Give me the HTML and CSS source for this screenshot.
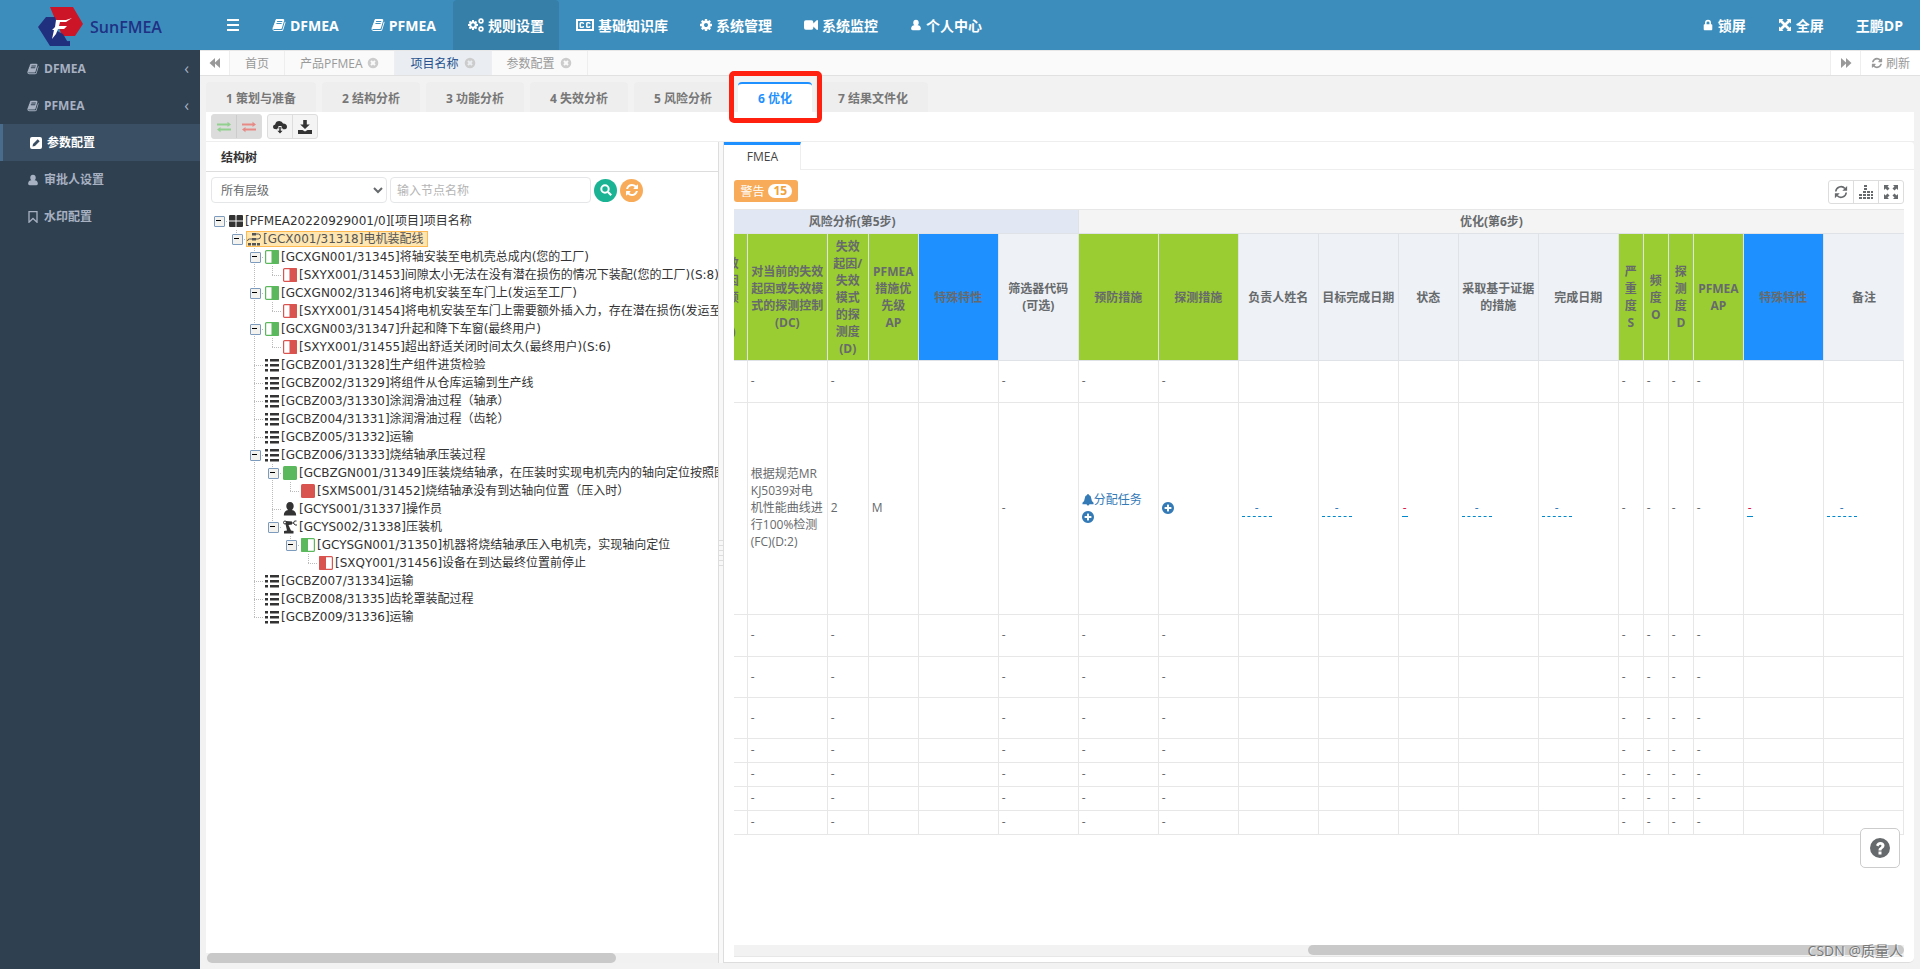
FILE: index.html
```html
<!DOCTYPE html>
<html lang="zh-CN">
<head>
<meta charset="utf-8">
<title>SunFMEA</title>
<link rel="stylesheet" href="styles.css">
</head>
<body>
<svg class="sprite" aria-hidden="true">
  <symbol id="book" viewBox="0 0 1792 1792"><path d="M1703 478q40 57 18 129l-275 906q-19 64-76.5 107.5t-122.5 43.5h-923q-77 0-148.5-53.5t-99.5-131.5q-24-67-2-127 0-4 3-27t4-37q1-8-3-21.5t-3-19.5q2-11 8-21t16.5-23.5 16.5-23.5q23-38 45-91.5t30-91.5q3-10 .5-30t-.5-28q3-11 17-28t17-23q21-36 42-92t25-90q1-9-2.5-32t.5-28q4-13 22-30.5t22-22.5q19-26 42.5-84.5t27.5-96.5q1-8-3-25.5t-2-26.5q2-8 9-18t18-23 17-21q8-12 16.5-30.5t15-35 16-36 19.5-32 26.5-23.5 36-11.5 47.5 5.5l-1 3q38-9 51-9h761q74 0 114 56t18 130l-274 906q-36 119-71.5 153.5t-128.5 34.5h-869q-27 0-38 15-11 16-1 43 24 70 144 70h923q29 0 56-15.5t35-41.5l300-987q7-22 5-57 38 15 59 43zm-1064 2q-4 13 2 22.5t20 9.5h608q13 0 25.5-9.5t16.5-22.5l21-64q4-13-2-22.5t-20-9.5h-608q-13 0-25.5 9.5t-16.5 22.5zm-83 256q-4 13 2 22.5t20 9.5h608q13 0 25.5-9.5t16.5-22.5l21-64q4-13-2-22.5t-20-9.5h-608q-13 0-25.5 9.5t-16.5 22.5z"/></symbol>
  <symbol id="refresh" viewBox="0 0 1792 1792"><path d="M1639 1056q0 5-1 7-64 268-268 434.5t-478 166.5q-146 0-282.5-55t-243.5-157l-129 129q-19 19-45 19t-45-19-19-45v-448q0-26 19-45t45-19h448q26 0 45 19t19 45-19 45l-137 137q71 66 161 102t187 36q134 0 250-65t186-179q11-17 53-117 8-23 30-23h192q13 0 22.5 9.5t9.5 22.5zm25-800v448q0 26-19 45t-45 19h-448q-26 0-45-19t-19-45 19-45l138-138q-148-137-349-137-134 0-250 65t-186 179q-11 17-53 117-8 23-30 23h-199q-13 0-22.5-9.5t-9.5-22.5v-7q65-268 270-434.5t480-166.5q146 0 284 55.5t245 156.5l130-129q19-19 45-19t45 19 19 45z"/></symbol>
  <symbol id="cog" viewBox="128 128 1536 1536"><path d="M1152 896q0-106-75-181t-181-75-181 75-75 181 75 181 181 75 181-75 75-181zm512-109v222q0 12-8 23t-20 13l-185 28q-19 54-39 91 35 50 107 138 10 12 10 25t-9 23q-27 37-99 108t-94 71q-12 0-26-9l-138-108q-44 23-91 38-16 136-29 186-7 28-36 28h-222q-14 0-24.5-8.5t-11.5-21.5l-28-184q-49-16-90-37l-141 107q-10 9-25 9-14 0-25-11-126-114-165-168-7-10-7-23 0-12 8-23 15-21 51-66.5t54-70.5q-27-50-41-99l-183-27q-13-2-21-12.5t-8-23.5v-222q0-12 8-23t19-13l186-28q14-46 39-92-40-57-107-138-10-12-10-24 0-10 9-23 26-36 98.5-107.5t94.5-71.5q13 0 26 10l138 107q44-23 91-38 16-136 29-186 7-28 36-28h222q14 0 24.5 8.5t11.5 21.5l28 184q49 16 90 37l142-107q9-9 24-9 13 0 25 10 129 119 165 170 7 8 7 22 0 12-8 23-15 21-51 66.5t-54 70.5q26 50 41 98l183 28q13 2 21 12.5t8 23.5z"/></symbol>
  <symbol id="plus" viewBox="128 128 1536 1536"><path d="M1344 960v-128q0-26-19-45t-45-19h-256v-256q0-26-19-45t-45-19h-128q-26 0-45 19t-19 45v256h-256q-26 0-45 19t-19 45v128q0 26 19 45t45 19h256v256q0 26 19 45t45 19h128q26 0 45-19t19-45v-256h256q26 0 45-19t19-45zm320-64q0 209-103 385.5t-279.5 279.5-385.5 103-385.5-103-279.5-279.5-103-385.5 103-385.5 279.5-279.5 385.5-103 385.5 103 279.5 279.5 103 385.5z"/></symbol>
  <symbol id="cogs" viewBox="0 0 16 14"><use href="#cog" x="0" y="2" width="10" height="10"/><use href="#cog" x="10" y="0" width="6" height="6"/><use href="#cog" x="10" y="8" width="6" height="6"/></symbol>
  <symbol id="cc" viewBox="0 0 18 14"><path fill-rule="evenodd" d="M0 1h18v12H0zM2 3v8h14V3zM8 5.5V6H6.800V5.500H5v3h1.800V8H8v.5Q8 10 6.500 10h-1.500Q3.500 10 3.500 8.500v-3Q3.500 4 5 4h1.500Q8 4 8 5.500zM14.500 5.500V6h-1.200V5.500h-1.800v3h1.800V8h1.200v.5q0 1.500-1.500 1.500h-1.500Q10 10 10 8.500v-3Q10 4 11.500 4H13q1.500 0 1.500 1.500z"/></symbol>
  <symbol id="video" viewBox="0 0 15 14"><path d="M2 2h6q2 0 2 2v1.500L13.500 2H15v10h-1.500L10 8.500V10q0 2-2 2H2q-2 0-2-2V4q0-2 2-2z"/></symbol>
  <symbol id="user" viewBox="0 0 12 14"><path d="M6 1c2 0 3.200 1.500 3.200 3.300 0 1.200-.5 2.300-1.300 2.900 2.600.2 3.800 1.800 3.800 4.300Q11.700 13 10 13H2Q.3 13 .3 11.500C.3 9 1.500 7.400 4.100 7.200 3.300 6.600 2.800 5.500 2.800 4.300 2.800 2.500 4 1 6 1z"/></symbol>
  <symbol id="lock" viewBox="0 0 10 14"><path fill-rule="evenodd" d="M1.500 6V4.500a3.500 3.500 0 0 1 7 0V6H9q1 0 1 1v5q0 1-1 1H1q-1 0-1-1V7q0-1 1-1zM3.300 6h3.400V4.500a1.700 1.700 0 0 0-3.400 0z"/></symbol>
  <symbol id="expand" viewBox="0 0 14 14"><path d="M1 1h4.500L4.200 2.300 7 5.100l2.800-2.800L8.500 1H13v4.500l-1.300-1.300L8.900 7l2.800 2.800L13 8.500V13H8.500l1.300-1.300L7 8.900l-2.800 2.800L5.500 13H1V8.500l1.300 1.300L5.100 7 2.300 4.200 1 5.500z"/></symbol>
  <symbol id="full" viewBox="0 0 14 14"><path d="M0 0h5L3.500 1.500 5.500 3.500l-2 2L1.500 3.500 0 5zM14 0v5l-1.500-1.500-2 2-2-2 2-2L9 0zM0 14V9l1.500 1.500 2-2 2 2-2 2L5 14zM14 14H9l1.500-1.500-2-2 2-2 2 2L14 9z"/></symbol>
  <symbol id="edit" viewBox="0 0 12 12"><path fill-rule="evenodd" d="M2 0h8q2 0 2 2v8q0 2-2 2H2q-2 0-2-2V2q0-2 2-2zM2.500 9.500l2.500-.5 4.700-4.700-2-2L3 7z"/></symbol>
  <symbol id="mark" viewBox="0 0 10 12"><path d="M1 .7h8v10.500L5 7.500l-4 3.700z" fill="none" stroke="currentColor" stroke-width="1.300"/></symbol>
  <symbol id="close" viewBox="0 0 12 12"><path fill-rule="evenodd" d="M6 .7a5.300 5.300 0 1 1 0 10.600A5.300 5.300 0 0 1 6 .7zM4.700 3.300L3.300 4.700 4.600 6 3.300 7.300l1.400 1.400L6 7.400l1.300 1.300 1.400-1.400L7.400 6l1.300-1.300-1.400-1.400L6 4.600z"/></symbol>
  <symbol id="back" viewBox="0 0 12 12"><path d="M6 1v4.500L11 1v10L6 6.500V11L.5 6z"/></symbol>
  <symbol id="swap" viewBox="0 0 14 12"><path d="M0 2.600h10.500V.800L14 3.500 10.500 6V4.400H0zM14 9.400H3.500V11.200L0 8.500 3.500 6v1.600H14z"/></symbol>
  <symbol id="cloud" viewBox="0 0 15 14"><path d="M3.500 9.500Q0 9.500 0 6.800 0 4.600 2.300 4.200 3 .5 6.800.5q3 0 4 2.700Q15 3.500 15 6.600 15 9.500 11.500 9.500h-1V8.300L9.200 9V6H5.800v3L4.500 8.300v1.200zM6.700 7h1.600v4h2L7.500 14l-2.800-3h2z"/></symbol>
  <symbol id="download" viewBox="0 0 14 14"><path d="M5.200 0h3.600v4.500h3L7 9 2.200 4.500h3zM0 10h4.500L7 11.500 9.500 10H14v4H0z"/></symbol>
  <symbol id="search" viewBox="0 0 12 12"><path d="M8 8l3.200 3.200" stroke="currentColor" stroke-width="2.200"/><circle cx="5" cy="5" r="3.700" fill="none" stroke="currentColor" stroke-width="2"/></symbol>
  <symbol id="cycle" viewBox="0 0 16 16"><path d="M2 7.500A6 6 0 0 1 12.500 4M14 8.500A6 6 0 0 1 3.500 12" fill="none" stroke="currentColor" stroke-width="1.800"/><path d="M15 1v5.500H9.500zM1 15V9.500h5.500z"/></symbol>
  <symbol id="bars" viewBox="0 0 14 14"><path d="M0 12h3v2H0zM0 9h3v2H0zM4 12h3v2H4zM4 9h3v2H4zM4 6h3v2H4zM5 0h3v2H5zM5 3h3v2H5zM8 12h3v2H8zM8 9h3v2H8zM8 6h3v2H8zM12 12h2v2h-2zM12 9h2v2h-2zM12 6h2v2h-2z"/></symbol>
  <symbol id="bell" viewBox="0 0 12 13"><path d="M6 0q1 0 1 1.100Q9.300 1.700 9.500 4.500 9.700 8 12 9.500V11H7.500Q7.300 12.500 6 12.500T4.500 11H0V9.500Q2.300 8 2.500 4.500 2.700 1.700 5 1.100 5 0 6 0z"/></symbol>
  <symbol id="grid4" viewBox="0 0 14 14"><path d="M1 1h4.500q1 0 1 1v4.500H0V2q0-1 1-1zM8.500 1H13q1 0 1 1v4.500H7.500V2q0-1 1-1zM0 7.500h6.500V13H1q-1 0-1-1zM7.500 7.500H14V12q0 1-1 1H7.500z"/></symbol>
  <symbol id="flow" viewBox="0 0 14 14"><path d="M5 1h4v2.500H5zM5 6h4v2.500H5zM5 11h4v2.500H5zM1 11h3v2.500H1zM10 11h3v2.500h-3z"/><path d="M9 2h2.500Q13.500 2 13.500 4.500T11 7H9M5 7H2.500Q.5 7 .5 9" fill="none" stroke="currentColor"/></symbol>
  <symbol id="list" viewBox="0 0 14 14"><path d="M0 1h3v2.500H0zM5 1h9v2.500H5zM0 6h3v2.500H0zM5 6h9v2.500H5zM0 11h3v2.500H0zM5 11h9v2.500H5z"/></symbol>
  <symbol id="person" viewBox="0 0 14 14"><path d="M7 0c2.400 0 3.700 1.800 3.700 4 0 1.600-.7 3.200-1.900 4 2.800.6 4.400 2 4.400 5.500H.8C.8 10 2.400 8.600 5.200 8 4 7.200 3.300 5.600 3.300 4 3.300 1.800 4.600 0 7 0z"/></symbol>
  <symbol id="robot" viewBox="0 0 14 14"><circle cx="2" cy="2.500" r="1.500" fill="none" stroke="currentColor"/><path d="M3 1l6 .5v3L5.500 5 8 10.500 10.500 11v2.500H1V11l3-.5L2.500 4z"/><path d="M9 3h2M13.500 1h-2L10.500 3l1.500 2h2" fill="none" stroke="currentColor"/></symbol>
  <symbol id="right-half" viewBox="0 0 14 14"><rect x=".6" y=".6" width="12.800" height="12.800" rx="1" fill="#fff" stroke="currentColor" stroke-width="1.200"/><path d="M6.500 0H13q1 0 1 1v12q0 1-1 1H6.500z"/></symbol>
  <symbol id="left-half" viewBox="0 0 14 14"><rect x=".6" y=".6" width="12.800" height="12.800" rx="1" fill="#fff" stroke="currentColor" stroke-width="1.200"/><path d="M1 0h6v14H1q-1 0-1-1V1q0-1 1-1z"/></symbol>
  <symbol id="solid" viewBox="0 0 14 14"><rect width="14" height="14" rx="1.500"/></symbol>
  <symbol id="help" viewBox="0 0 20 20"><path fill-rule="evenodd" d="M10 0a10 10 0 1 1 0 20 10 10 0 0 1 0-20zM8.500 13.500v3h3v-3zM6 7.200l2.400 1.200Q9 6.700 10.200 6.700q1.300 0 1.300 1.100 0 .8-1.400 1.600Q8.500 10.300 8.500 12v.5h3V12q0-.6 1.300-1.400Q14.500 9.500 14.500 7.500 14.300 3.900 10.300 3.900 7.500 3.900 6 7.200z"/></symbol>
</svg>

<header class="top">
  <a class="brand" href="#">
    <svg class="logo" viewBox="0 0 46 42"><path fill="#cc1628" d="M12 1h23l10 17-8 12H24l-6-17h-1z"/><path fill="#20307f" d="M8 11h9l3 9-4 16 16-1v5H12L0 21z"/><path fill="#20307f" d="M17 24l8 4 7 12H12z"/><path fill="#fff" d="M18 14h10l6-2-6 4h-6l-1 4h8l-3 3h-6l-2 5-4 5 2-9h-2l3-3z"/></svg>
    <span>SunFMEA</span>
  </a>
  <button class="burger" type="button" aria-label="菜单"><i></i><i></i><i></i></button>
  <nav class="menu">
    <a href="#"><svg class="i14"><use href="#book"/></svg>DFMEA</a>
    <a href="#"><svg class="i14"><use href="#book"/></svg>PFMEA</a>
    <a href="#" class="on"><svg class="i16"><use href="#cogs"/></svg>规则设置</a>
    <a href="#"><svg class="i18"><use href="#cc"/></svg>基础知识库</a>
    <a href="#"><svg class="i12"><use href="#cog"/></svg>系统管理</a>
    <a href="#"><svg class="i14"><use href="#video"/></svg>系统监控</a>
    <a href="#"><svg class="i12"><use href="#user"/></svg>个人中心</a>
  </nav>
  <nav class="menu account">
    <a href="#"><svg class="i12"><use href="#lock"/></svg>锁屏</a>
    <a href="#"><svg class="i14"><use href="#expand"/></svg>全屏</a>
    <a href="#">王鹏DP</a>
  </nav>
</header>

<div class="shell">
  <nav class="side">
    <a href="#"><svg class="i12"><use href="#book"/></svg>DFMEA<b>‹</b></a>
    <a href="#"><svg class="i12"><use href="#book"/></svg>PFMEA<b>‹</b></a>
    <a href="#" class="on"><svg class="i12"><use href="#edit"/></svg>参数配置</a>
    <a href="#"><svg class="i12"><use href="#user"/></svg>审批人设置</a>
    <a href="#"><svg class="i12"><use href="#mark"/></svg>水印配置</a>
  </nav>

  <main class="main">
    <div class="pages">
      <button type="button" class="end" aria-label="向左"><svg class="i12"><use href="#back"/></svg></button>
      <a href="#">首页</a>
      <a href="#">产品PFMEA<svg class="i12"><use href="#close"/></svg></a>
      <a href="#" class="on">项目名称<svg class="i12"><use href="#close"/></svg></a>
      <a href="#">参数配置<svg class="i12"><use href="#close"/></svg></a>
      <button type="button" class="end push" aria-label="向右"><svg class="i12 flip"><use href="#back"/></svg></button>
      <button type="button" class="end reload"><svg class="i12"><use href="#refresh"/></svg>刷新</button>
    </div>

    <div class="work">
      <nav class="steps">
        <a href="#">1 策划与准备</a>
        <a href="#">2 结构分析</a>
        <a href="#">3 功能分析</a>
        <a href="#">4 失效分析</a>
        <a href="#">5 风险分析</a>
        <a href="#" class="on">6 优化</a>
        <a href="#">7 结果文件化</a>
      </nav>
      <div class="tools">
        <div class="group off">
          <button type="button" class="green" disabled aria-label="展开"><svg class="i14"><use href="#swap"/></svg></button>
          <button type="button" class="red" disabled aria-label="收起"><svg class="i14"><use href="#swap"/></svg></button>
        </div>
        <div class="group">
          <button type="button" aria-label="云下载"><svg class="i14"><use href="#cloud"/></svg></button>
          <button type="button" aria-label="下载"><svg class="i14"><use href="#download"/></svg></button>
        </div>
      </div>

      <div class="panes">
        <section class="left">
          <h2>结构树</h2>
          <form class="filter">
            <select aria-label="层级"><option>所有层级</option></select>
            <input type="text" placeholder="输入节点名称" aria-label="节点名称">
            <button type="button" class="find" aria-label="搜索"><svg class="i12"><use href="#search"/></svg></button>
            <button type="button" class="reset" aria-label="重置"><svg class="i14"><use href="#refresh"/></svg></button>
          </form>
          <div class="treebox">
            <ul class="tree">
              <li><div class="node"><i class="sw"></i><a href="#"><svg class="i14"><use href="#grid4"/></svg>[PFMEA20220929001/0][项目]项目名称</a></div>
                <ul><li><div class="node"><i class="sw"></i><a href="#" class="sel"><svg class="i14"><use href="#flow"/></svg>[GCX001/31318]电机装配线</a></div>
                  <ul>
                    <li><div class="node"><i class="sw"></i><a href="#"><svg class="i14 green"><use href="#right-half"/></svg>[GCXGN001/31345]将轴安装至电机壳总成内(您的工厂)</a></div>
                      <ul><li><div class="node"><i></i><a href="#"><svg class="i14 red"><use href="#right-half"/></svg>[SXYX001/31453]间隙太小无法在没有潜在损伤的情况下装配(您的工厂)(S:8)</a></div></li></ul></li>
                    <li><div class="node"><i class="sw"></i><a href="#"><svg class="i14 green"><use href="#right-half"/></svg>[GCXGN002/31346]将电机安装至车门上(发运至工厂)</a></div>
                      <ul><li><div class="node"><i></i><a href="#"><svg class="i14 red"><use href="#right-half"/></svg>[SXYX001/31454]将电机安装至车门上需要额外插入力，存在潜在损伤(发运至</a></div></li></ul></li>
                    <li><div class="node"><i class="sw"></i><a href="#"><svg class="i14 green"><use href="#right-half"/></svg>[GCXGN003/31347]升起和降下车窗(最终用户)</a></div>
                      <ul><li><div class="node"><i></i><a href="#"><svg class="i14 red"><use href="#right-half"/></svg>[SXYX001/31455]超出舒适关闭时间太久(最终用户)(S:6)</a></div></li></ul></li>
                    <li><div class="node"><i></i><a href="#"><svg class="i14"><use href="#list"/></svg>[GCBZ001/31328]生产组件进货检验</a></div></li>
                    <li><div class="node"><i></i><a href="#"><svg class="i14"><use href="#list"/></svg>[GCBZ002/31329]将组件从仓库运输到生产线</a></div></li>
                    <li><div class="node"><i></i><a href="#"><svg class="i14"><use href="#list"/></svg>[GCBZ003/31330]涂润滑油过程（轴承）</a></div></li>
                    <li><div class="node"><i></i><a href="#"><svg class="i14"><use href="#list"/></svg>[GCBZ004/31331]涂润滑油过程（齿轮）</a></div></li>
                    <li><div class="node"><i></i><a href="#"><svg class="i14"><use href="#list"/></svg>[GCBZ005/31332]运输</a></div></li>
                    <li><div class="node"><i class="sw"></i><a href="#"><svg class="i14"><use href="#list"/></svg>[GCBZ006/31333]烧结轴承压装过程</a></div>
                      <ul>
                        <li><div class="node"><i class="sw"></i><a href="#"><svg class="i14 green"><use href="#solid"/></svg>[GCBZGN001/31349]压装烧结轴承，在压装时实现电机壳内的轴向定位按照图</a></div>
                          <ul><li><div class="node"><i></i><a href="#"><svg class="i14 red"><use href="#solid"/></svg>[SXMS001/31452]烧结轴承没有到达轴向位置（压入时）</a></div></li></ul></li>
                        <li><div class="node"><i></i><a href="#"><svg class="i14"><use href="#person"/></svg>[GCYS001/31337]操作员</a></div></li>
                        <li><div class="node"><i class="sw"></i><a href="#"><svg class="i14"><use href="#robot"/></svg>[GCYS002/31338]压装机</a></div>
                          <ul><li><div class="node"><i class="sw"></i><a href="#"><svg class="i14 green"><use href="#left-half"/></svg>[GCYSGN001/31350]机器将烧结轴承压入电机壳，实现轴向定位</a></div>
                            <ul><li><div class="node"><i></i><a href="#"><svg class="i14 red"><use href="#left-half"/></svg>[SXQY001/31456]设备在到达最终位置前停止</a></div></li></ul></li></ul></li>
                      </ul></li>
                    <li><div class="node"><i></i><a href="#"><svg class="i14"><use href="#list"/></svg>[GCBZ007/31334]运输</a></div></li>
                    <li><div class="node"><i></i><a href="#"><svg class="i14"><use href="#list"/></svg>[GCBZ008/31335]齿轮罩装配过程</a></div></li>
                    <li><div class="node"><i></i><a href="#"><svg class="i14"><use href="#list"/></svg>[GCBZ009/31336]运输</a></div></li>
                  </ul></li></ul></li>
            </ul>
          </div>
          <div class="bar"><i></i></div>
        </section>

        <div class="split"><i></i></div>

        <section class="right">
          <nav class="tabs"><a href="#">FMEA</a></nav>
          <div class="sheet">
            <div class="acts">
              <button type="button" class="warn">警告<span>15</span></button>
              <div class="group plain">
                <button type="button" aria-label="刷新"><svg class="i14"><use href="#cycle"/></svg></button>
                <button type="button" aria-label="列"><svg class="i14"><use href="#bars"/></svg></button>
                <button type="button" aria-label="全屏"><svg class="i14"><use href="#full"/></svg></button>
              </div>
            </div>
            <table class="fmea">
              <colgroup><col><col class="w80"><col class="w41"><col class="w50"><col class="w80"><col class="w80"><col class="w80"><col class="w80"><col class="w80"><col class="w80"><col class="w60"><col class="w80"><col class="w80"><col class="w25"><col class="w25"><col class="w25"><col class="w50"><col class="w80"><col class="w80"></colgroup>
              <thead>
                <tr class="band"><th colspan="6" class="risk"><span>风险分析(第5步)</span></th><th colspan="13">优化(第6步)</th></tr>
                <tr class="names">
                  <th class="g cut"><div><span>失效起因的频度(O)</span></div></th>
                  <th class="g">对当前的失效起因或失效模式的探测控制(DC)</th>
                  <th class="g">失效起因/失效模式的探测度(D)</th>
                  <th class="g">PFMEA措施优先级<br>AP</th>
                  <th class="b">特殊特性</th>
                  <th>筛选器代码<br>(可选)</th>
                  <th class="g">预防措施</th>
                  <th class="g">探测措施</th>
                  <th>负责人姓名</th>
                  <th>目标完成日期</th>
                  <th>状态</th>
                  <th>采取基于证据的措施</th>
                  <th>完成日期</th>
                  <th class="g">严重度S</th>
                  <th class="g">频度O</th>
                  <th class="g">探测度D</th>
                  <th class="g">PFMEA AP</th>
                  <th class="b">特殊特性</th>
                  <th>备注</th>
                </tr>
              </thead>
              <tbody>
                <tr class="h42"><td></td><td>-</td><td>-</td><td></td><td></td><td>-</td><td>-</td><td>-</td><td></td><td></td><td></td><td></td><td></td><td>-</td><td>-</td><td>-</td><td>-</td><td></td><td></td></tr>
                <tr class="h212"><td></td><td>根据规范MRKJ5039对电机性能曲线进行100%检测(FC)(D:2)</td><td>2</td><td>M</td><td></td><td>-</td>
                  <td><a href="#"><svg class="i12"><use href="#bell"/></svg>分配任务</a><br><a href="#" aria-label="添加"><svg class="i12"><use href="#plus"/></svg></a></td>
                  <td><a href="#" aria-label="添加"><svg class="i12"><use href="#plus"/></svg></a></td>
                  <td><a href="#" class="ed">-</a></td><td><a href="#" class="ed">-</a></td><td><a href="#" class="ed none">-</a></td><td><a href="#" class="ed">-</a></td><td><a href="#" class="ed">-</a></td>
                  <td>-</td><td>-</td><td>-</td><td>-</td><td><a href="#" class="ed none">-</a></td><td><a href="#" class="ed">-</a></td></tr>
                <tr class="h42"><td></td><td>-</td><td>-</td><td></td><td></td><td>-</td><td>-</td><td>-</td><td></td><td></td><td></td><td></td><td></td><td>-</td><td>-</td><td>-</td><td>-</td><td></td><td></td></tr>
                <tr class="h41"><td></td><td>-</td><td>-</td><td></td><td></td><td>-</td><td>-</td><td>-</td><td></td><td></td><td></td><td></td><td></td><td>-</td><td>-</td><td>-</td><td>-</td><td></td><td></td></tr>
                <tr class="h41"><td></td><td>-</td><td>-</td><td></td><td></td><td>-</td><td>-</td><td>-</td><td></td><td></td><td></td><td></td><td></td><td>-</td><td>-</td><td>-</td><td>-</td><td></td><td></td></tr>
                <tr class="h24"><td></td><td>-</td><td>-</td><td></td><td></td><td>-</td><td>-</td><td>-</td><td></td><td></td><td></td><td></td><td></td><td>-</td><td>-</td><td>-</td><td>-</td><td></td><td></td></tr>
                <tr class="h24"><td></td><td>-</td><td>-</td><td></td><td></td><td>-</td><td>-</td><td>-</td><td></td><td></td><td></td><td></td><td></td><td>-</td><td>-</td><td>-</td><td>-</td><td></td><td></td></tr>
                <tr class="h24"><td></td><td>-</td><td>-</td><td></td><td></td><td>-</td><td>-</td><td>-</td><td></td><td></td><td></td><td></td><td></td><td>-</td><td>-</td><td>-</td><td>-</td><td></td><td></td></tr>
                <tr class="h24"><td></td><td>-</td><td>-</td><td></td><td></td><td>-</td><td>-</td><td>-</td><td></td><td></td><td></td><td></td><td></td><td>-</td><td>-</td><td>-</td><td>-</td><td></td><td></td></tr>
              </tbody>
            </table>
            <div class="track"><i></i></div>
          </div>
        </section>
      </div>
    </div>
  </main>
</div>
<div class="marker"></div>
<button type="button" class="help" aria-label="帮助"><svg><use href="#help"/></svg></button>
<span class="credit">CSDN @质量人</span>
</body>
</html>
```
FILE: styles.css
```css
* { box-sizing: border-box; }
body {
  margin: 0; height: 100vh; display: flex; flex-direction: column; overflow: hidden;
  font: 12px/17px "Open Sans", "Noto Sans CJK SC", sans-serif; color: #676a6c; background: #f2f2f2;
}
a { color: inherit; text-decoration: none; }
button { font: inherit; color: inherit; padding: 0; border: 0; background: none; }
svg { fill: currentColor; flex: none; display: block; }
i { font-style: normal; }
ul { list-style: none; margin: 0; padding: 0; }
.sprite { width: 0; height: 0; position: absolute; }
.i12 { width: 12px; height: 12px; }
.i14 { width: 14px; height: 14px; }
.i16 { width: 16px; height: 14px; }
.i18 { width: 18px; height: 14px; }

.top { display: flex; height: 50px; flex: none; background: #3c8dbc; color: #fff; }
.brand { width: 200px; padding: 4px 0 0 38px; display: flex; align-items: center; gap: 6px; color: #1f3184; font-size: 16px; font-weight: 600; }
.brand .logo { width: 46px; height: 42px; }
.burger { width: 57px; padding-left: 27px; display: flex; flex-direction: column; justify-content: center; gap: 3px; }
.burger i { width: 12px; height: 2px; background: #fff; }
.menu { display: flex; gap: 2px; font-size: 14px; font-weight: 700; }
.menu a { display: flex; align-items: center; gap: 4px; padding: 0 15px; height: 50px; }
.menu .on { background: #367fa9; border-radius: 4px 4px 0 0; }
.account { margin-left: auto; padding-right: 2px; }

.shell { flex: 1; display: flex; min-height: 0; }
.side { width: 200px; flex: none; background: #2f4050; color: #a7b1c2; font-weight: 700; }
.side a { display: flex; align-items: center; gap: 5px; height: 37px; padding: 0 11px 0 27px; }
.side b { margin-left: auto; font-size: 16px; font-weight: 400; }
.side .on { background: #3a4f63; color: #fff; border-left: 3px solid #4a6c8c; }

.main { flex: 1; min-width: 0; display: flex; flex-direction: column; }
.pages { display: flex; height: 26px; background: #fafafa; border-top: 1px solid #e7e7e7; border-bottom: 1px solid #e1e1e1; color: #999; }
.pages > * { display: flex; align-items: center; gap: 5px; padding: 0 15px; border-right: 1px solid #eee; }
.pages .end { padding: 0 8px 0 9px; background: #fff; }
.pages .push { margin-left: auto; border-left: 1px solid #eee; }
.pages .reload { gap: 3px; padding: 0 10px; border-right: 0; }
.pages a svg { color: #ccc; }
.pages .on { background: #eaedf1; color: #23508e; }
.flip { transform: scaleX(-1); }

.work { flex: 1; min-height: 0; display: flex; flex-direction: column; padding: 6px; }
.steps { display: flex; gap: 6px; font-weight: 700; color: #777; }
.steps a { height: 30px; padding: 8px 20px 0; background: #eee; border-radius: 4px 4px 0 0; }
.steps .on { background: #fff; color: #1e90ff; border-top: 2px solid #1e90ff; padding-top: 6px; }
.tools { display: flex; gap: 5px; height: 30px; padding: 2px 5px; background: #fff; border-bottom: 1px solid #eee; }
.group { display: flex; height: 25px; border: 1px solid #ddd; border-radius: 3px; background: #f4f4f4; color: #333; }
.group button { width: 24px; display: grid; place-items: center; }
.group button + button { width: 25px; border-left: 1px solid #ddd; }
.group.off { background: #dcdcdc; }
.off button + button { border-left-color: #ccc; }
.off .green { color: #92d08f; }
.off .red { color: #e78a86; }
.group.plain { height: 24px; background: #fff; color: #676a6c; }

.panes { flex: 1; min-height: 0; display: flex; }
.left { width: 30%; flex: none; display: flex; flex-direction: column; background: #fff; }
.left h2 { margin: 0; padding: 7px 15px 0; height: 30px; font-size: 12px; line-height: 18px; color: #333; border-bottom: 1px solid #ddd; }
.filter { display: flex; align-items: center; gap: 3px; padding: 5px; }
.filter select, .filter input { height: 26px; font: inherit; color: #676a6c; border: 1px solid #e5e6e7; border-radius: 4px; background: #fff; }
.filter select { width: 176px; padding: 0 5px; }
.filter input { width: 201px; padding: 0 6px; }
.filter input::placeholder { color: #b5b5b5; }
.filter button { width: 23px; height: 23px; border-radius: 50%; color: #fff; display: grid; place-items: center; }
.find { background: #1ab394; }
.reset { background: #f8ac59; }

.treebox { flex: 1; overflow: hidden; padding: 4px 0 4px 4px; }
.tree { font: 12px/18px "DejaVu Sans", "Noto Sans CJK SC", sans-serif; color: #333; white-space: nowrap; }
.tree ul { padding-left: 18px; }
.tree li li { background: repeating-linear-gradient(#bbb 0 1px, transparent 1px 2px) 8px 0 / 1px 100% no-repeat; }
.tree li li:last-child { background-size: 1px 10px; }
.node { display: flex; align-items: center; height: 18px; }
.node i { width: 18px; height: 18px; flex: none; background: repeating-linear-gradient(to right, #bbb 0 1px, transparent 1px 2px) 8px 9px / 10px 1px no-repeat; display: flex; align-items: center; padding-left: 4px; }
.sw::before { content: ""; width: 9px; height: 9px; border: 1px solid #7d9cbd; border-radius: 1px; background: linear-gradient(#000, #000) 1px 3px / 5px 1px no-repeat #f4f2ee; }
.node a { display: flex; align-items: center; gap: 2px; height: 16px; padding: 0 1px; }
.node .sel { background: #ffe6b0; border: 1px solid #ffb951; padding: 0 4px 0 0; color: #555; }
.node .green { color: #5cb85c; }
.node .red { color: #d9534f; }
.bar { height: 10px; padding-left: 1px; background: #f1f1f1; }
.bar i { display: block; width: 80%; height: 10px; border-radius: 5px; background: #c9c9c9; }

.split { width: 6px; flex: none; border: solid #ddd; border-width: 0 1px; background: #f8f8f8; display: flex; align-items: center; }
.split i { width: 100%; height: 26px; background: repeating-linear-gradient(#ddd 0 1px, transparent 1px 5px); }

.right { flex: 1; min-width: 0; display: flex; flex-direction: column; background: #fff; border-bottom: 1px solid #ddd; border-radius: 0 4px 5px 0; }
.tabs { height: 28px; flex: none; border-bottom: 1px solid #eee; }
.tabs a { display: block; width: 77px; height: 28px; text-align: center; line-height: 24px; background: #fff; border-top: 3px solid #1e90ff; border-right: 1px solid #eee; color: #444; }
.sheet { flex: 1; min-height: 0; display: flex; flex-direction: column; padding: 10px 10px 5px; }
.acts { display: flex; justify-content: space-between; align-items: flex-start; height: 29px; flex: none; }
.warn { display: flex; align-items: center; gap: 4px; height: 22px; padding: 0 6px; border-radius: 3px; background: #f8ac59; color: #fff; }
.warn span { padding: 0 5px; height: 14px; line-height: 14px; border-radius: 7px; background: #fff; color: #f0a23c; font-weight: 700; }

.fmea { width: 100%; table-layout: fixed; border-collapse: separate; border-spacing: 0; border-top: 1px solid #e7e7e7; }
.w80 { width: 80px; } .w60 { width: 60px; } .w50 { width: 50px; } .w41 { width: 41px; } .w25 { width: 25px; }
.fmea th { padding: 0 3px; border: solid #dfe3e8; border-width: 0 1px 1px 0; background: #eef1f6; font-weight: 700; }
.fmea th:last-child { border-right: 0; }
.fmea .band th { height: 24px; background: #f4f4f4; }
.fmea .band .risk { background: #e1e7f3; }
.risk span { padding-right: 108px; }
.fmea .names th { height: 127px; }
.fmea .g { background: #9acd32; }
.fmea .b { background: #1e90ff; }
.fmea .cut { padding: 0; overflow: hidden; }
.cut div { display: flex; justify-content: flex-end; }
.cut span { width: 40px; flex: none; padding: 0 7px; }
.fmea td { padding: 0 3px 2px; border: solid #e7e7e7; border-width: 0 1px 1px 0; word-break: break-all; }
.h212 td { height: 212px; } .h42 td { height: 42px; } .h41 td { height: 41px; } .h24 td { height: 24px; }
.fmea a { color: #337ab7; }
.fmea td svg { display: inline-block; vertical-align: -2px; }
.fmea a.ed { display: inline-block; padding: 0 13px; border-bottom: 1px dashed #08c; }
.fmea a.ed.none { padding: 0 1px; color: #d14; }
.track { margin-top: auto; height: 12px; background: #f2f2f2; border-bottom: 1px solid #e7e7e7; }
.track i { display: block; width: 51%; height: 10px; margin-left: auto; border-radius: 5px; background: #c9c9c9; }

.marker { position: absolute; left: 729px; top: 71px; width: 93px; height: 52px; border: 5px solid #ff2010; border-radius: 5px; }
.help { position: absolute; right: 20px; bottom: 101px; width: 40px; height: 40px; border: 1px solid #ccc; border-radius: 5px; background: #fff; display: grid; place-items: center; color: #676a6c; }
.help svg { width: 20px; height: 20px; }
.credit { position: absolute; right: 17px; bottom: 10px; font-size: 14px; color: #777; text-shadow: 1px 1px 1px #fff; }
```
